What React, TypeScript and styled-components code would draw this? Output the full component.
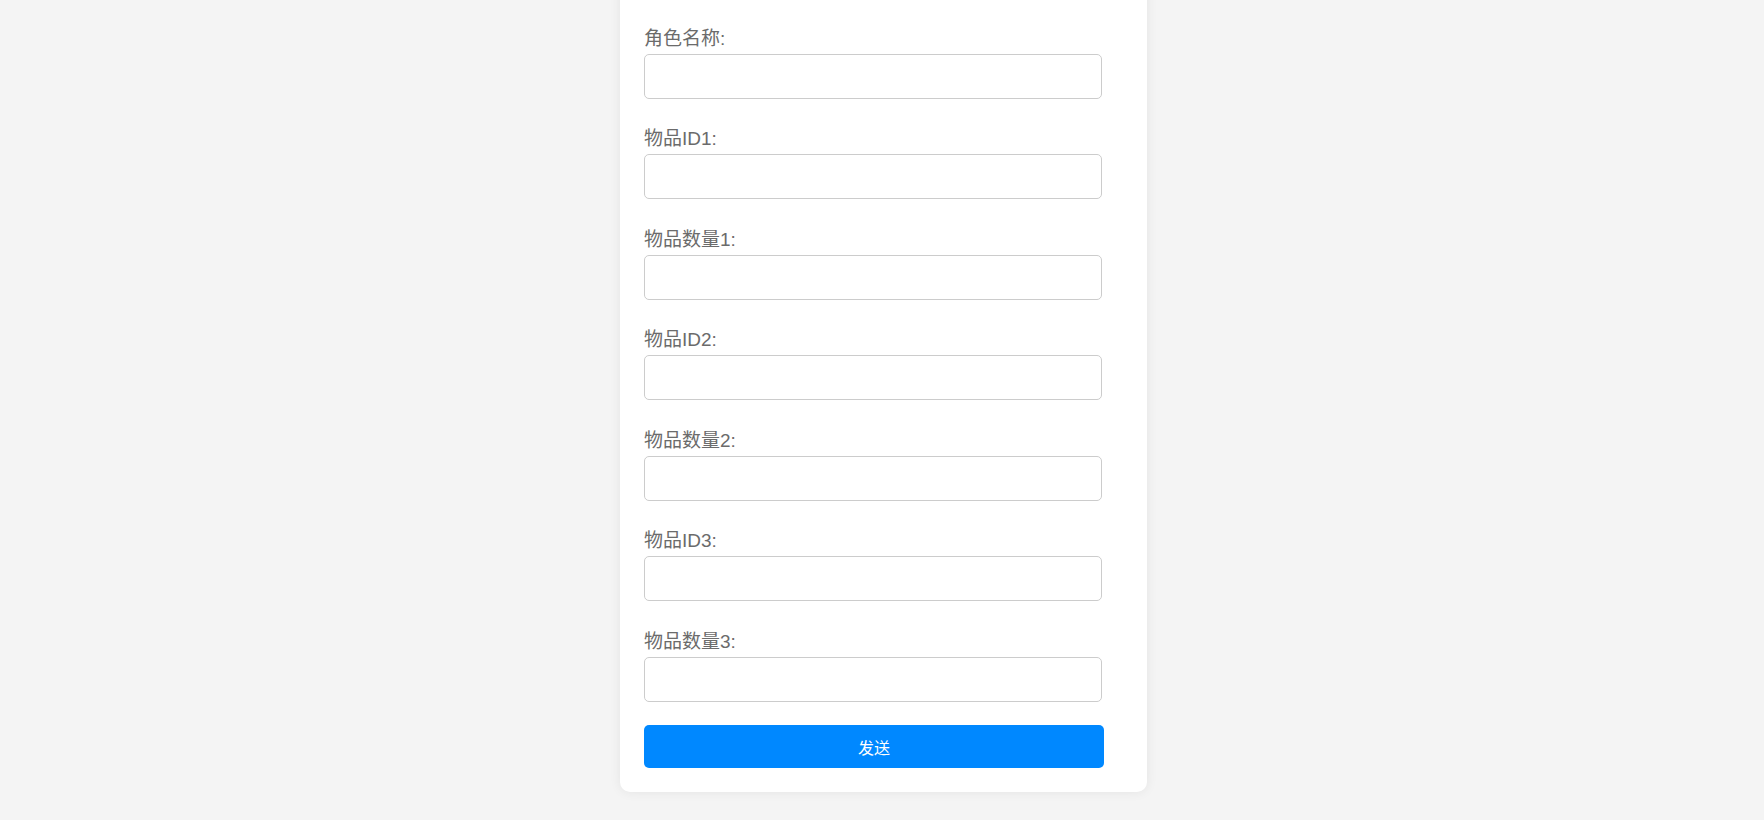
import React from 'react';
import styled, { createGlobalStyle } from 'styled-components';

const GlobalStyle = createGlobalStyle`
  html, body {
    margin: 0;
    padding: 0;
    background: #f4f4f4;
    font-family: "Liberation Sans", "Noto Sans CJK SC", sans-serif;
  }
`;

const Page = styled.div`
  height: 100vh;
  box-sizing: border-box;
  overflow: hidden;
  display: flex;
  flex-direction: column;
  align-items: center;
  justify-content: flex-end;
  padding: 0 0 28px 3px;
`;

const Card = styled.div`
  flex-shrink: 0;
  width: 527px;
  box-sizing: border-box;
  padding: 24px;
  background: #fff;
  border-radius: 10px;
  box-shadow: 0 0 12px rgba(0, 0, 0, 0.07);
`;

const Title = styled.h2`
  margin: 0 0 22px;
  font-size: 24px;
  line-height: 32px;
  font-weight: 600;
  color: #333;
  text-align: center;
`;

const Form = styled.form`
  display: flex;
  flex-direction: column;
  gap: 23.5px;
`;

const Field = styled.div`
  display: flex;
  flex-direction: column;
`;

const Label = styled.label`
  display: block;
  padding-top: 3px;
  font-size: 19px;
  line-height: 27px;
  color: #6b6b6b;
  margin-bottom: 2px;
`;

const Input = styled.input`
  width: 458px;
  height: 45px;
  box-sizing: border-box;
  padding: 0 10px;
  border: 1px solid #ccc;
  border-radius: 5px;
  font-size: 16px;
  background: #fff;
  outline: none;
`;

const SubmitButton = styled.button`
  width: 460px;
  height: 43px;
  border: none;
  border-radius: 5px;
  background: #0088ff;
  color: #fff;
  font-size: 16px;
  font-family: "Liberation Sans", "Noto Sans CJK SC", sans-serif;
  cursor: pointer;
`;

const fields = [
  { key: 'role', label: '角色名称:' },
  { key: 'id1', label: '物品ID1:' },
  { key: 'num1', label: '物品数量1:' },
  { key: 'id2', label: '物品ID2:' },
  { key: 'num2', label: '物品数量2:' },
  { key: 'id3', label: '物品ID3:' },
  { key: 'num3', label: '物品数量3:' },
];

export default function App() {
  return (
    <>
      <GlobalStyle />
      <Page>
        <Card>
          <Title>发送物品</Title>
          <Form onSubmit={e => e.preventDefault()}>
            {fields.map(f => (
              <Field key={f.key}>
                <Label htmlFor={f.key}>{f.label}</Label>
                <Input id={f.key} type="text" />
              </Field>
            ))}
            <SubmitButton type="submit">发送</SubmitButton>
          </Form>
        </Card>
      </Page>
    </>
  );
}
